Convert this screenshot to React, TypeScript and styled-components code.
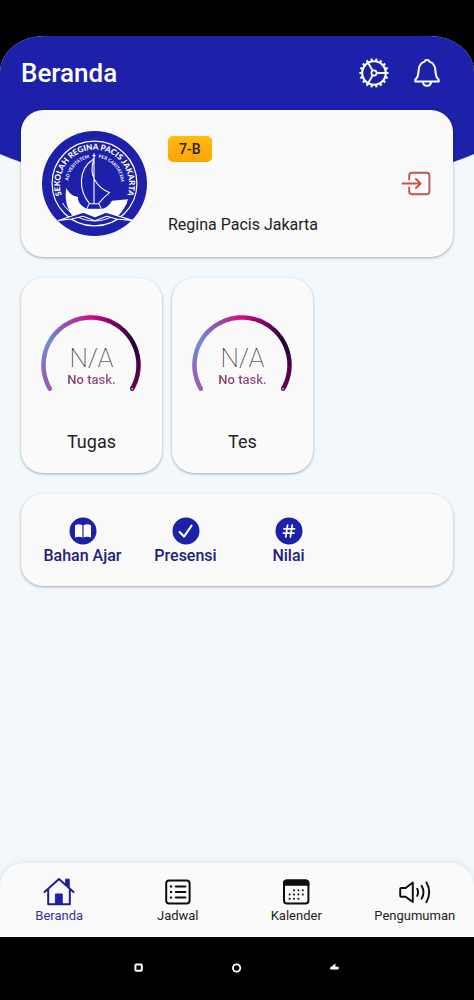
import React from "react";
import styled, { createGlobalStyle } from "styled-components";

const BLUE = "#1d20a8";

const GlobalStyle = createGlobalStyle`
  * { box-sizing: border-box; }
  body {
    margin: 0;
    background: #000;
    font-family: Roboto, "Liberation Sans", sans-serif;
    color: #222;
  }
  button { font: inherit; color: inherit; border: 0; padding: 0; background: none; cursor: pointer; }
  a { color: inherit; text-decoration: none; }
  h1, h2, p { margin: 0; font-weight: 400; }
  svg { display: block; }
`;

const Device = styled.div`
  min-height: 100vh;
  display: flex;
  flex-direction: column;
  padding-top: 36px;
  background: #000;
`;

const Screen = styled.div`
  flex: 1;
  display: flex;
  flex-direction: column;
  overflow: hidden;
  border-radius: 44px 44px 0 0 / 36px 36px 0 0;
  background: #f3f8fc;
`;

const Header = styled.header`
  height: 74px;
  display: flex;
  align-items: center;
  justify-content: space-between;
  padding: 0 31px 0 21px;
  background: ${BLUE};
  color: #fff;
`;

const Title = styled.h1`
  font-size: 26px;
  line-height: 32px;
  font-weight: 500;
`;

const HeaderActions = styled.div`
  display: flex;
  gap: 21px;
`;

const Content = styled.main`
  flex: 1;
  display: flex;
  flex-direction: column;
  gap: 21px;
  padding: 0 21px 24px;
  background: radial-gradient(ellipse 60% 81px at 50% 0, ${BLUE} 99%, transparent 100%);
`;

const Card = styled.section`
  border-radius: 22px;
  background: #fafafa;
  box-shadow: 0 1px 3px rgba(0, 0, 0, 0.32);
`;

const ProfileCard = styled(Card)`
  display: flex;
  gap: 21px;
  padding: 21px 22px 21px 21px;
`;

const ProfileInfo = styled.div`
  flex: 1;
  display: flex;
  flex-direction: column;
  justify-content: space-between;
  align-items: flex-start;
  padding: 5px 0 1px;
`;

const ClassBadge = styled.span`
  padding: 3px 11px;
  border-radius: 5px;
  background: linear-gradient(#ffbc0c, #ffa304);
  font-size: 14px;
  line-height: 20px;
  font-weight: 500;
`;

const School = styled.p`
  font-size: 16px;
  line-height: 20px;
`;

const ExitButton = styled.button`
  align-self: center;
`;

const TaskRow = styled.div`
  display: flex;
  gap: 10px;
`;

const TaskCard = styled(Card)`
  flex: 0 0 calc((100% - 9px) / 3);
  display: flex;
  flex-direction: column;
  align-items: center;
  gap: 34px;
  padding: 36px 0 19px;
`;

const Gauge = styled.div`
  display: grid;
  justify-items: center;
  align-items: start;
  > * { grid-area: 1 / 1; }
`;

const GaugeText = styled.div`
  display: flex;
  flex-direction: column;
  align-items: center;
  padding-top: 31px;
`;

const GaugeValue = styled.span`
  font-size: 26px;
  line-height: 26px;
  font-weight: 100;
`;

const GaugeNote = styled.span`
  font-size: 13px;
  line-height: 18px;
  font-weight: 500;
  color: transparent;
  background: linear-gradient(90deg, #7f3c6c, #925b88);
  background-clip: text;
`;

const TaskName = styled.h2`
  font-size: 18px;
  line-height: 24px;
`;

const ShortcutCard = styled(Card)`
  display: grid;
  grid-template-columns: repeat(4, 1fr);
  padding: 23px 10px 19px;
`;

const Shortcut = styled.button`
  display: flex;
  flex-direction: column;
  align-items: center;
  font-size: 16px;
  line-height: 22px;
  font-weight: 500;
  color: #22207a;
  white-space: nowrap;
`;

const TabBar = styled.nav`
  display: grid;
  grid-template-columns: repeat(4, 1fr);
  height: 74px;
  padding-top: 13px;
  border-radius: 24px 24px 0 0;
  background: #fafafa;
  box-shadow: 0 0 8px rgba(0, 0, 0, 0.1);
`;

const Tab = styled.a<{ $active?: boolean }>`
  display: flex;
  flex-direction: column;
  align-items: center;
  font-size: 13px;
  line-height: 16px;
  color: ${(p) => (p.$active ? "#35339a" : "#222")};
`;

const SystemBar = styled.footer`
  display: flex;
  justify-content: center;
  align-items: flex-start;
  gap: 84px;
  height: 63px;
  padding-top: 24px;
  color: #fff;
`;

const GearIcon = () => {
  const teeth = Array.from({ length: 18 }, (_, i) => i * 20 + 10);
  return (
    <svg width="32" height="32" viewBox="0 0 32 32" fill="none" stroke="currentColor">
      <circle cx="16" cy="16" r="11.8" strokeWidth="2.1" />
      <circle cx="16" cy="16" r="2.6" strokeWidth="1.7" />
      {teeth.map((a) => (
        <path key={a} d="M16 1.4V4" strokeWidth="2.2" transform={`rotate(${a} 16 16)`} />
      ))}
      {[90, 210, 330].map((a) => (
        <path key={a} d="M16 13.4V4" strokeWidth="1.9" transform={`rotate(${a} 16 16)`} />
      ))}
    </svg>
  );
};

const BellIcon = () => (
  <svg width="32" height="32" viewBox="0 0 32 32" fill="none" stroke="currentColor" strokeWidth="2" strokeLinejoin="round">
    <path d="M13.6 4.6C14 2.4 18 2.4 18.4 4.6C22.8 6 24.2 9.4 24.4 13.6C24.6 18.4 25.3 20.6 27.7 22.6V24.4H4.3V22.6C6.7 20.6 7.4 18.4 7.6 13.6C7.8 9.4 9.2 6 13.6 4.6Z" />
    <path d="M12 24.8C12.2 30.2 19.8 30.2 20 24.8" />
  </svg>
);

const ExitIcon = () => (
  <svg width="30" height="26" viewBox="0 0 30 26" fill="none" strokeWidth="1.9" strokeLinecap="round" strokeLinejoin="round">
    <defs>
      <linearGradient id="exit" gradientUnits="userSpaceOnUse" x1="0" y1="0" x2="30" y2="0">
        <stop offset="0" stopColor="#dc493b" />
        <stop offset="1" stopColor="#bd5460" />
      </linearGradient>
    </defs>
    <g stroke="url(#exit)">
      <path d="M8.2 8.6V4.4Q8.2 1.8 10.8 1.8H25.8Q28.4 1.8 28.4 4.4V20.6Q28.4 23.2 25.8 23.2H10.8Q8.2 23.2 8.2 20.6V16.4" />
      <path d="M1.5 12.51H19.4M15 8L19.6 12.5L15 17" />
    </g>
  </svg>
);

const SchoolLogo = () => (
  <svg width="105" height="105" viewBox="0 0 105 105" fill="none" stroke="#fff" role="img" aria-label="Sekolah Regina Pacis Jakarta">
    <defs>
      <path id="outer-arc" d="M21.6 68.5A34.5 34.5 0 1 1 83.4 68.5" />
      <path id="inner-arc" d="M26 53A26.5 26.5 0 0 1 79 53" />
    </defs>
    <circle cx="52.5" cy="52.5" r="52.5" fill={BLUE} stroke="none" />
    <circle cx="52.5" cy="52.5" r="42.4" strokeWidth="1.2" />
    <path d="M20.5 72A37.5 37.5 0 0 0 84.5 72" strokeWidth="1" />
    <g fill="#fff" stroke="none" fontFamily="Lato, sans-serif" textAnchor="middle">
      <text fontSize="8.1" fontWeight="900">
        <textPath href="#outer-arc" startOffset="50%">SEKOLAH REGINA PACIS JAKARTA</textPath>
      </text>
      <text fontSize="4.6" fontWeight="700">
        <textPath href="#inner-arc" startOffset="24%">AD VERITATEM</textPath>
      </text>
      <text fontSize="4.6" fontWeight="700">
        <textPath href="#inner-arc" startOffset="76%">PER CARITATEM</textPath>
      </text>
    </g>
    <path d="M24.4 57C27 62.5 31 65 36 66C35.6 71.6 39.4 75 45 78H59.7C64 77 67.6 74.4 70 69.8L86 68.2C84 75 81 80 76 85L64 82L53 86.5L41.3 82L31 85.5C25.5 79 22 68 24.4 57Z" fill="#fff" stroke="none" />
    <path d="M16.3 89.4L41.3 81.3L53 85.7L64 81.3L91.3 89.6L74.7 88L64.7 85.3L53 89.8L41 85.3L29.7 88Z" fill={BLUE} strokeWidth="1.1" strokeLinejoin="round" />
    <path d="M47 72.8H57L59.4 78.3H44.8Z" fill={BLUE} strokeWidth="1" />
    <path d="M52 22.3V73M50.4 24.6H53.6M51.6 28C35 39 37 60 47.6 72.6M52.4 27C45 45 56 57 67.4 61.6Q62 66 56.4 72.6" strokeWidth="1.1" />
  </svg>
);

// Colour stops of the gauge, from its lower left end clockwise to its lower right end.
const GAUGE_STOPS: [number, number[]][] = [
  [0, [154, 92, 178]],
  [0.13, [136, 108, 194]],
  [0.25, [112, 140, 214]],
  [0.36, [142, 84, 176]],
  [0.5, [210, 12, 128]],
  [0.62, [120, 0, 104]],
  [0.76, [24, 4, 52]],
  [0.87, [74, 0, 74]],
  [1, [92, 4, 88]],
];

const gaugeColor = (t: number) => {
  const i = Math.max(1, GAUGE_STOPS.findIndex(([s]) => s >= t));
  const [a, from] = GAUGE_STOPS[i - 1];
  const [b, to] = GAUGE_STOPS[i];
  const k = (t - a) / (b - a);
  return `rgb(${from.map((c, n) => Math.round(c + (to[n] - c) * k)).join(",")})`;
};

const gaugePoint = (t: number) => {
  const angle = ((150 + 240 * t) * Math.PI) / 180;
  return [51 + 47.5 * Math.cos(angle), 51 + 47.5 * Math.sin(angle)];
};

const GaugeArc = () => {
  const count = 80;
  const [sx, sy] = gaugePoint(0);
  const [ex, ey] = gaugePoint(1);
  return (
    <svg width="102" height="82" viewBox="0 0 102 82" fill="none" strokeWidth="4.4">
      <circle cx={sx} cy={sy} r="2.2" fill={gaugeColor(0)} />
      {Array.from({ length: count }, (_, i) => {
        const [x1, y1] = gaugePoint(i / count);
        const [x2, y2] = gaugePoint(Math.min(1, (i + 1.2) / count));
        return <path key={i} d={`M${x1} ${y1}A47.5 47.5 0 0 1 ${x2} ${y2}`} stroke={gaugeColor((i + 0.5) / count)} />;
      })}
      <circle cx={ex} cy={ey} r="2.2" fill={gaugeColor(1)} />
      <circle cx={ex} cy={ey} r="0.8" fill="#fff" />
    </svg>
  );
};

const BookIcon = () => (
  <svg width="28" height="28" viewBox="0 0 28 28">
    <circle cx="14" cy="14" r="13.5" fill={BLUE} />
    <path d="M6 8.2Q10 6.4 13.4 8.2V20.6Q10 19 6 20.6ZM14.6 8.2Q18 6.4 22 8.2V20.6Q18 19 14.6 20.6Z" fill="#fff" />
  </svg>
);

const CheckIcon = () => (
  <svg width="28" height="28" viewBox="0 0 28 28" fill="none">
    <circle cx="14" cy="14" r="13.5" fill={BLUE} />
    <path d="M7.6 15L12 19.6L19.6 8.6" stroke="#fff" strokeWidth="2.1" strokeLinecap="round" strokeLinejoin="round" />
  </svg>
);

const HashIcon = () => (
  <svg width="28" height="28" viewBox="0 0 28 28" fill="none">
    <circle cx="14" cy="14" r="13.5" fill={BLUE} />
    <path d="M12.6 8L10.8 20M17.2 8L15.4 20M9 11.8H19.6M8.4 16.2H19" stroke="#fff" strokeWidth="1.7" strokeLinecap="round" />
  </svg>
);

const HomeIcon = () => (
  <svg width="32" height="32" viewBox="0 0 32 32" fill="none" stroke="#1f1d96" strokeWidth="2" strokeLinecap="round" strokeLinejoin="round">
    <path d="M1.5 16L16 3L30.5 16M5.2 13.4V28.2H26.8V13.4" />
    <path d="M23 3.2H26.2V11.4L23 8.5Z" fill="#1f1d96" strokeWidth="1" />
    <path d="M12.8 18H19.2V28H12.8Z" fill={BLUE} strokeWidth="1" />
  </svg>
);

const ListIcon = () => (
  <svg width="32" height="32" viewBox="0 0 32 32" fill="none" stroke="#0c0c0c" strokeWidth="2" strokeLinecap="round">
    <rect x="4.2" y="4.4" width="23.4" height="23" rx="3" />
    <path d="M13.8 10.4H23.4M13.8 16H23.4M13.8 21.6H23.4" />
    <path d="M9 10.4H9.02M9 16H9.02M9 21.6H9.02" strokeWidth="2.4" />
  </svg>
);

const CalendarIcon = () => (
  <svg width="32" height="32" viewBox="0 0 32 32" fill="none" stroke="#0c0c0c" strokeWidth="2">
    <rect x="4" y="4.4" width="24.4" height="23" rx="3" />
    <path d="M4 8.8V7.1Q4 4.4 7 4.4H25.4Q28.4 4.4 28.4 7.1V8.8Z" fill="#0c0c0c" />
    <path d="M14 14.3H14.02M18.4 14.3H18.42M22.8 14.3H22.82M9.6 18.5H9.62M14 18.5H14.02M18.4 18.5H18.42M22.8 18.5H22.82M9.6 22.7H9.62M14 22.7H14.02M18.4 22.7H18.42" strokeWidth="2" strokeLinecap="round" />
  </svg>
);

const SpeakerIcon = () => (
  <svg width="34" height="32" viewBox="0 0 34 32" fill="none" stroke="#0c0c0c" strokeWidth="1.9" strokeLinecap="round" strokeLinejoin="round">
    <path d="M2.2 13Q2.2 12 3.2 12H7.6L14.8 6.6V26L7.6 20.8H3.2Q2.2 20.8 2.2 19.8Z" />
    <path d="M19.2 12.8Q21 16.2 19.2 19.8M23.6 9.8Q27.4 16.2 23.6 22.8M28.4 6.6Q34 16 28.4 26.2" />
  </svg>
);

const tasks = ["Tugas", "Tes"];

const shortcuts = [
  { label: "Bahan Ajar", icon: <BookIcon /> },
  { label: "Presensi", icon: <CheckIcon /> },
  { label: "Nilai", icon: <HashIcon /> },
];

const tabs = [
  { label: "Beranda", icon: <HomeIcon />, active: true },
  { label: "Jadwal", icon: <ListIcon /> },
  { label: "Kalender", icon: <CalendarIcon /> },
  { label: "Pengumuman", icon: <SpeakerIcon /> },
];

export default function App() {
  return (
    <Device>
      <GlobalStyle />
      <Screen>
        <Header>
          <Title>Beranda</Title>
          <HeaderActions>
            <button aria-label="Pengaturan"><GearIcon /></button>
            <button aria-label="Notifikasi"><BellIcon /></button>
          </HeaderActions>
        </Header>
        <Content>
          <ProfileCard>
            <SchoolLogo />
            <ProfileInfo>
              <ClassBadge>7-B</ClassBadge>
              <School>Regina Pacis Jakarta</School>
            </ProfileInfo>
            <ExitButton aria-label="Keluar"><ExitIcon /></ExitButton>
          </ProfileCard>
          <TaskRow>
            {tasks.map((name) => (
              <TaskCard key={name}>
                <Gauge>
                  <GaugeArc />
                  <GaugeText>
                    <GaugeValue>N/A</GaugeValue>
                    <GaugeNote>No task.</GaugeNote>
                  </GaugeText>
                </Gauge>
                <TaskName>{name}</TaskName>
              </TaskCard>
            ))}
          </TaskRow>
          <ShortcutCard>
            {shortcuts.map((s) => (
              <Shortcut key={s.label}>{s.icon}{s.label}</Shortcut>
            ))}
          </ShortcutCard>
        </Content>
        <TabBar>
          {tabs.map((t) => (
            <Tab key={t.label} href="#" $active={t.active}>{t.icon}{t.label}</Tab>
          ))}
        </TabBar>
      </Screen>
      <SystemBar>
        <button aria-label="Recent apps">
          <svg width="14" height="14" viewBox="0 0 14 14" fill="none" stroke="currentColor" strokeWidth="2">
            <rect x="3.4" y="3.4" width="6.4" height="6.4" rx="1" />
          </svg>
        </button>
        <button aria-label="Home">
          <svg width="14" height="14" viewBox="0 0 14 14" fill="none" stroke="currentColor" strokeWidth="1.8">
            <circle cx="6.6" cy="7" r="3.7" />
          </svg>
        </button>
        <button aria-label="Back">
          <svg width="14" height="14" viewBox="0 0 14 14" fill="currentColor">
            <path d="M2.2 6.6L7.4 2.4L7.4 5.8H9.8Q10.8 5.8 10.8 7T9.8 8.4H2.8Q1.2 7.8 2.2 6.6Z" />
          </svg>
        </button>
      </SystemBar>
    </Device>
  );
}
